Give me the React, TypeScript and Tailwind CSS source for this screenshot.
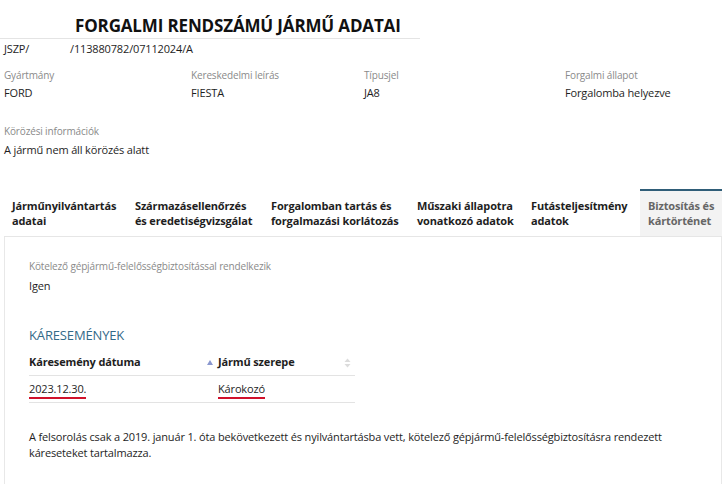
import React from "react";

const fields = [
  { label: "Gyártmány", value: "FORD", w: "w-[187px]" },
  { label: "Kereskedelmi leírás", value: "FIESTA", w: "w-[173px]" },
  { label: "Típusjel", value: "JA8", w: "w-[201px]" },
  { label: "Forgalmi állapot", value: "Forgalomba helyezve", w: "w-[150px]" },
];

const tabs = [
  { title: ["Járműnyilvántartás", "adatai"], w: "w-[123px]" },
  { title: ["Származásellenőrzés", "és eredetiségvizsgálat"], w: "w-[136px]" },
  { title: ["Forgalomban tartás és", "forgalmazási korlátozás"], w: "w-[146px]" },
  { title: ["Műszaki állapotra", "vonatkozó adatok"], w: "w-[114px]" },
  { title: ["Futásteljesítmény", "adatok"], w: "w-[117px]" },
];

const SortBoth = () => (
  <svg width="7" height="10" viewBox="0 0 7 10" className="shrink-0">
    <path d="M3.5 0.5 L6.5 4 L0.5 4 Z" fill="#dcdcdc" />
    <path d="M3.5 9.5 L6.5 6 L0.5 6 Z" fill="#dcdcdc" />
  </svg>
);

const SortUp = () => (
  <svg width="6" height="5" viewBox="0 0 6 5" className="shrink-0">
    <path d="M3 0 L6 5 L0 5 Z" fill="#8a98cf" />
  </svg>
);

export default function App() {
  return (
    <div className="w-[727px] h-[484px] overflow-hidden bg-white text-[#1e1e1e] font-['Open_Sans',sans-serif] tracking-[-0.15px]">
      {/* fejléc */}
      <div className="w-[420px] border-b border-[#e4e4e4] pt-[15px] pb-[1px] pl-[75px]">
        <h1 className="whitespace-nowrap text-[17px] leading-[22px] font-bold text-[#111]">
          FORGALMI RENDSZÁMÚ JÁRMŰ ADATAI
        </h1>
      </div>
      <div className="flex px-[4px] pt-[2px] text-[11px] leading-[16px]">
        <span className="w-[66px]">JSZP/</span>
        <span>/113880782/07112024/A</span>
      </div>

      <div className="flex px-[4px] pt-[11px]">
        {fields.map((f) => (
          <div key={f.label} className={f.w}>
            <div className="text-[10px] leading-[14px] text-[#8a8a8a]">{f.label}</div>
            <div className="mt-[3px] text-[11px] leading-[16px]">{f.value}</div>
          </div>
        ))}
      </div>

      <div className="px-[4px] pt-[23px]">
        <div className="text-[10px] leading-[14px] text-[#8a8a8a]">Körözési információk</div>
        <div className="mt-[4px] text-[11px] leading-[16px]">A jármű nem áll körözés alatt</div>
      </div>

      {/* fülek */}
      <div className="mt-[31px] ml-[4px] w-[718px] flex border-b border-[#e6e6e6] h-[48px]">
        {tabs.map((t) => (
          <div
            key={t.title[0]}
            className={`${t.w} shrink-0 pl-[8px] pt-[9px] text-[11px] leading-[15px] font-bold text-[#1e1e1e] whitespace-nowrap`}
          >
            <div>{t.title[0]}</div>
            <div>{t.title[1]}</div>
          </div>
        ))}
        <div className="flex-1 border-t-2 border-[#2f5d78] bg-[#f3f3f3] pl-[8px] pt-[7px] text-[11px] leading-[15px] font-bold text-[#666]">
          <div>Biztosítás és</div>
          <div>kártörténet</div>
        </div>
      </div>

      {/* panel */}
      <div className="ml-[4px] w-[718px] border-l border-r border-[#e8e8e8] pl-[24px] pt-[22px] pb-[40px]">
        <div className="text-[10px] leading-[14px] text-[#8a8a8a]">
          Kötelező gépjármű-felelősségbiztosítással rendelkezik
        </div>
        <div className="mt-[5px] text-[11px] leading-[16px]">Igen</div>

        <div className="mt-[32px] text-[13px] leading-[18px] text-[#336a88]">KÁRESEMÉNYEK</div>

        <div className="mt-[6px] w-[326px] text-[11px]">
          <div className="flex h-[26px] items-center border-b border-[#e3e3e3] font-bold">
            <div className="w-[178px]">Káresemény dátuma</div>
            <div className="flex-1 flex items-center gap-[5px]">
              <SortUp />
              <span>Jármű szerepe</span>
            </div>
            <div className="pr-[4px]">
              <SortBoth />
            </div>
          </div>
          <div className="flex h-[27px] items-center border-b border-[#e3e3e3]">
            <div className="w-[189px]">
              <span className="border-b-2 border-[#d0112b] pb-[1px]">2023.12.30.</span>
            </div>
            <div>
              <span className="border-b-2 border-[#d0112b] pb-[1px]">Károkozó</span>
            </div>
          </div>
        </div>

        <p className="mt-[26px] w-[680px] text-[11px] leading-[16px]">
          A felsorolás csak a 2019. január 1. óta bekövetkezett és nyilvántartásba vett, kötelező
          gépjármű-felelősségbiztosításra rendezett káreseteket tartalmazza.
        </p>
      </div>
    </div>
  );
}
